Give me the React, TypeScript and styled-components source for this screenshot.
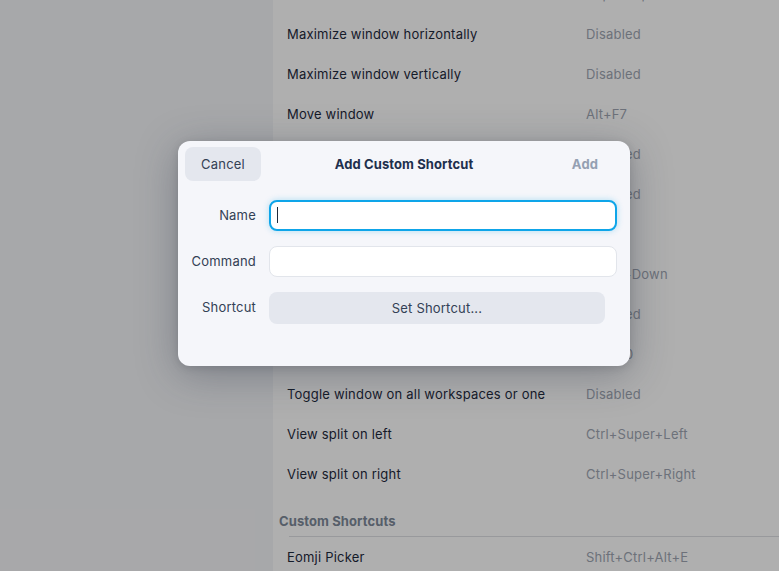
import React from "react";
import styled, { createGlobalStyle } from "styled-components";

type Shortcut = { name: string; keys: string };

const windowShortcuts: Shortcut[] = [
  { name: "Maximize window", keys: "Super+Up" },
  { name: "Maximize window horizontally", keys: "Disabled" },
  { name: "Maximize window vertically", keys: "Disabled" },
  { name: "Move window", keys: "Alt+F7" },
  { name: "Raise window above other windows", keys: "Disabled" },
  { name: "Raise window if covered, otherwise lower it", keys: "Disabled" },
  { name: "Resize window", keys: "Alt+F8" },
  { name: "Restore window", keys: "Super+Down" },
  { name: "Toggle fullscreen mode", keys: "Disabled" },
  { name: "Toggle maximization state", keys: "Alt+F10" },
  { name: "Toggle window on all workspaces or one", keys: "Disabled" },
  { name: "View split on left", keys: "Ctrl+Super+Left" },
  { name: "View split on right", keys: "Ctrl+Super+Right" },
];

const customShortcuts: Shortcut[] = [
  { name: "Eomji Picker", keys: "Shift+Ctrl+Alt+E" },
];

const App: React.FC = () => {
  return (
    <>
      <GlobalStyle />
      <Screen>
        <Sidebar />
        <Content>
          <List>
            {windowShortcuts.map((s) => (
              <Row key={s.name}>
                <RowName>{s.name}</RowName>
                <RowKeys>{s.keys}</RowKeys>
              </Row>
            ))}
          </List>
          <GroupTitle>Custom Shortcuts</GroupTitle>
          <Divider />
          {customShortcuts.map((s) => (
            <Row key={s.name}>
              <RowName>{s.name}</RowName>
              <RowKeys>{s.keys}</RowKeys>
            </Row>
          ))}
        </Content>

        <Backdrop />

        <Dialog>
          <DialogHeader>
            <HeaderButton>Cancel</HeaderButton>
            <DialogTitle>Add Custom Shortcut</DialogTitle>
            <HeaderButton $primary disabled>
              Add
            </HeaderButton>
          </DialogHeader>

          <Form>
            <Label>Name</Label>
            <InputWrap>
              <TextInput $focused />
              <Caret />
            </InputWrap>

            <Label>Command</Label>
            <TextInput />

            <Label>Shortcut</Label>
            <SetButton>Set Shortcut...</SetButton>
          </Form>
        </Dialog>
      </Screen>
    </>
  );
};

const GlobalStyle = createGlobalStyle`
  html, body {
    margin: 0;
    padding: 0;
    overflow: hidden;
  }

  body {
    font-family: Inter, "Noto Sans", sans-serif;
    font-size: 13px;
    letter-spacing: 0.2px;
    -webkit-font-smoothing: antialiased;
  }
`;

const Screen = styled.div`
  display: flex;
  height: 571px;
  overflow: hidden;
  position: relative;
  width: 779px;
`;

const Sidebar = styled.aside`
  background: #f0f1f4;
  flex: 0 0 273px;
`;

const Content = styled.main`
  background: #fbfbfb;
  flex: 1;
  overflow: hidden;
`;

const List = styled.div`
  margin-top: -26px;
`;

const Row = styled.div`
  align-items: center;
  display: grid;
  grid-template-columns: 299px 1fr;
  height: 40px;
  padding-left: 14px;
`;

const RowName = styled.span`
  color: #1e293b;
`;

const RowKeys = styled.span`
  color: #9ca3af;
`;

const GroupTitle = styled.h3`
  color: #7c8797;
  font-size: 13px;
  font-weight: 700;
  letter-spacing: 0.1px;
  line-height: 16px;
  margin: 0;
  padding: 19px 6px 7px;
`;

const Divider = styled.hr`
  border: none;
  border-top: 1px solid #dadce0;
  margin: 0 0 0 16px;
`;

const Backdrop = styled.div`
  background: rgba(0, 0, 0, 0.3);
  inset: 0;
  position: absolute;
`;

const Dialog = styled.section`
  background: #f5f6fa;
  border-radius: 12px;
  box-shadow: 0 8px 40px rgba(40, 50, 70, 0.35), 0 2px 8px rgba(0, 0, 0, 0.12);
  box-sizing: border-box;
  height: 225px;
  left: 178px;
  padding: 6px 7px 0;
  position: absolute;
  top: 141px;
  width: 452px;
`;

const DialogHeader = styled.header`
  align-items: center;
  display: grid;
  grid-template-columns: 76px 1fr 76px;
`;

const HeaderButton = styled.button<{ $primary?: boolean }>`
  background: ${(p) => (p.$primary ? "transparent" : "#e4e7ee")};
  border: none;
  border-radius: 8px;
  color: ${(p) => (p.$primary ? "#94a0b2" : "#334155")};
  font-family: inherit;
  font-size: 13px;
  font-weight: ${(p) => (p.$primary ? 700 : 400)};
  height: 34px;
  letter-spacing: 0.2px;
  padding: 0;
`;

const DialogTitle = styled.h2`
  color: #1e2f4d;
  font-size: 13px;
  font-weight: 700;
  letter-spacing: 0.1px;
  margin: 0;
  text-align: center;
`;

const Form = styled.div`
  align-items: center;
  display: grid;
  grid-template-columns: 66px 1fr;
  column-gap: 13px;
  row-gap: 15px;
  margin-top: 19px;
  padding: 0 6px 0 5px;
`;

const Label = styled.label`
  color: #334155;
  margin-top: -2px;
  text-align: right;
`;

const InputWrap = styled.div`
  position: relative;
`;

const TextInput = styled.input<{ $focused?: boolean }>`
  background: #ffffff;
  border: ${(p) => (p.$focused ? "2px solid #0ea5e9" : "1px solid #e2e5eb")};
  border-radius: 8px;
  box-shadow: ${(p) => (p.$focused ? "0 0 6px rgba(14, 165, 233, 0.3)" : "none")};
  box-sizing: border-box;
  caret-color: transparent;
  display: block;
  font-family: inherit;
  font-size: 13px;
  height: 31px;
  outline: none;
  width: 100%;
`;

const Caret = styled.span`
  background: #1e293b;
  height: 16px;
  left: 8px;
  position: absolute;
  top: 7px;
  width: 1px;
`;

const SetButton = styled.button`
  background: #e4e7ee;
  border: none;
  border-radius: 8px;
  color: #334155;
  font-family: inherit;
  font-size: 13px;
  height: 32px;
  letter-spacing: 0.2px;
  padding: 0;
  width: calc(100% - 12px);
`;

export default App;
